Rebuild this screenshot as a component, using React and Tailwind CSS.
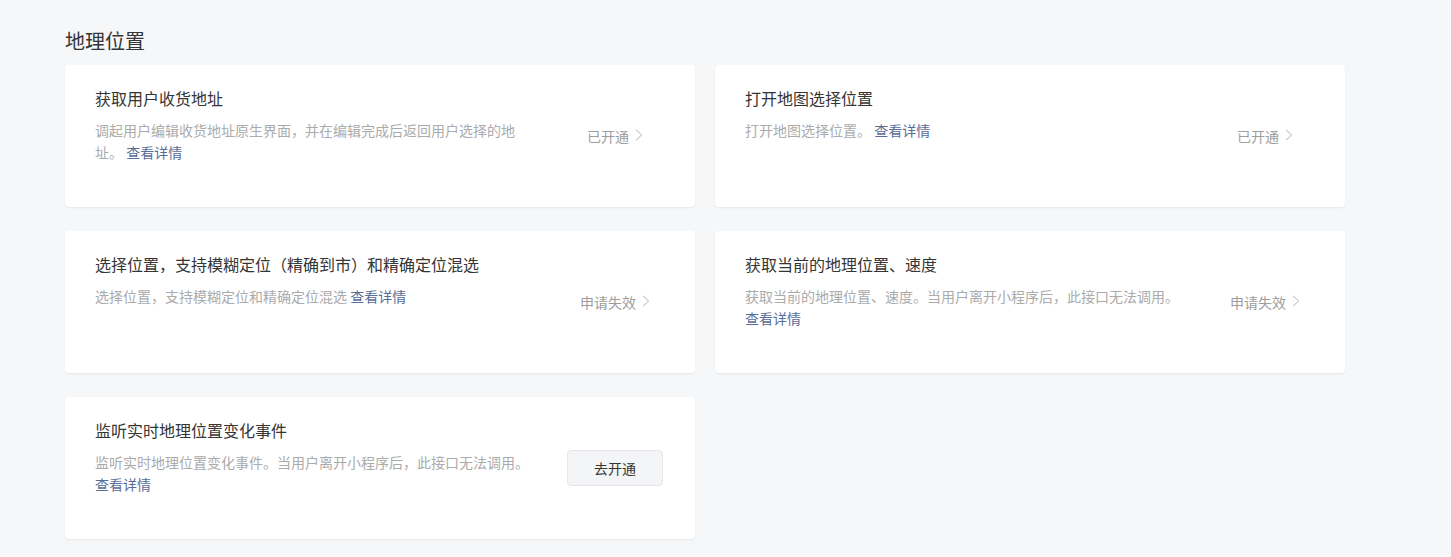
import React from 'react';

const items = [
  {
    title: '获取用户收货地址',
    desc: '调起用户编辑收货地址原生界面，并在编辑完成后返回用户选择的地址。',
    status: '已开通',
  },
  {
    title: '打开地图选择位置',
    desc: '打开地图选择位置。',
    status: '已开通',
  },
  {
    title: '选择位置，支持模糊定位（精确到市）和精确定位混选',
    desc: '选择位置，支持模糊定位和精确定位混选',
    status: '申请失效',
  },
  {
    title: '获取当前的地理位置、速度',
    desc: '获取当前的地理位置、速度。当用户离开小程序后，此接口无法调用。',
    status: '申请失效',
  },
  {
    title: '监听实时地理位置变化事件',
    desc: '监听实时地理位置变化事件。当用户离开小程序后，此接口无法调用。',
    action: '去开通',
  },
];

const Chevron = () => (
  <svg width="8" height="12" viewBox="0 0 8 12" fill="none" className="ml-[6px] -mt-[3px]">
    <path d="M1 0.8L6.6 6L1 11.2" stroke="#b2b2b2" strokeWidth="1" />
  </svg>
);

const ApiCard = ({ item }) => (
  <div className="flex h-[142px] rounded-[4px] bg-white shadow-[0_1px_2px_rgba(0,0,0,0.07)]">
    <div className="flex-1 pl-[30px] pt-[21px]">
      <h3 className="mb-[9px] text-[16px] leading-6 text-[#353535]">{item.title}</h3>
      <p className="w-[440px] text-[14px] leading-[22px] text-[#ababab]">
        {item.desc} <a className="cursor-pointer text-[#5a6d98]">查看详情</a>
      </p>
    </div>
    <div className="mr-[32px] flex w-[96px] shrink-0 items-center justify-center">
      {item.action ? (
        <button className="h-[36px] w-[96px] rounded-[4px] border border-[#e4e6ea] bg-[#f4f5f7] text-[14px] text-[#353535]">
          {item.action}
        </button>
      ) : (
        <span className="flex items-center whitespace-nowrap text-[14px] text-[#9d9d9d]">
          {item.status}
          <Chevron />
        </span>
      )}
    </div>
  </div>
);

export default function App() {
  return (
    <div
      className="min-h-[557px] bg-[#f6f7f9] pl-[65px] pt-[27px]"
      style={{ fontFamily: '"Noto Sans CJK SC", "Noto Sans", sans-serif' }}
    >
      <h2 className="mb-[10px] text-[20px] leading-7 text-[#353535]">地理位置</h2>
      <div className="grid grid-cols-[630px_630px] gap-x-5 gap-y-6">
        {items.map((item, i) => (
          <ApiCard key={i} item={item} />
        ))}
      </div>
    </div>
  );
}
